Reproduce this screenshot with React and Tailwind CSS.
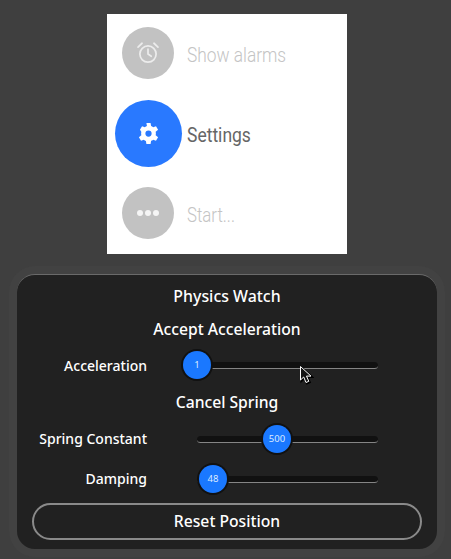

const Row = ({ color, big, text, textColor, weight, squeeze, children }) => (
  <div className="flex h-[80px] w-full items-center">
    <div className="flex w-[78px] ml-[2px] shrink-0 items-center justify-center -translate-y-[1px]">
      <div className={`flex items-center justify-center rounded-full ${big ? 'h-[67px] w-[67px]' : 'h-[52px] w-[52px]'} ${color}`}>{children}</div>
    </div>
    <span className={`inline-block origin-left whitespace-nowrap translate-y-[1px] text-[20px] leading-none font-['Roboto',sans-serif] ${squeeze} ${weight} ${textColor}`}>{text}</span>
  </div>
);

const Slider = ({ label, value, offset, h, shift }) => (
  <div className={`flex items-center ${h}`}>
    <div className={`w-[115px] whitespace-nowrap text-right text-[14px] leading-none font-medium text-white ${shift}`}>{label}</div>
    <div className="relative ml-[50px] h-[7px] w-[181px] rounded-full border-b border-b-[#858585] bg-[#111]">
      <div style={{ left: offset }} className="absolute top-1/2 flex h-[28px] w-[28px] -translate-x-1/2 -translate-y-1/2 items-center justify-center rounded-full bg-[#1a78ff] text-[9.5px] leading-none text-[#dcebff] shadow-[0_0_0_2px_#111]">
        {value}
      </div>
    </div>
  </div>
);

export default function App() {
  return (
    <div className="relative h-[559px] w-[451px] overflow-hidden bg-[#3f3f3f] pt-[14px] font-['Noto_Sans',sans-serif]">
      <div className="ml-[107px] flex h-[240px] w-[240px] flex-col bg-white">
        <Row color="bg-[#c2c2c2]" text="Show alarms" textColor="text-[#c4c4c4]" weight="font-light" squeeze="scale-x-[0.865]">
          <svg width="26" height="26" viewBox="0 0 24 24" fill="none" stroke="#ececec" strokeWidth="1.6" strokeLinecap="round" strokeLinejoin="round">
            <circle cx="12" cy="13" r="7.5" />
            <path d="M12 8.5V13l3 2" />
            <path d="M2.8 6.5 6.500 3M21.200 6.500 17.500 3" />
          </svg>
        </Row>
        <Row big color="bg-[#2979ff]" text="Settings" textColor="text-[#666]" weight="font-normal" squeeze="scale-x-[0.875]">
          <svg width="25" height="25" viewBox="0 0 24 24" fill="#fff">
            <path fillRule="evenodd" d="M10 2h4l.5 2.900a7.500 7.500 0 0 1 2 1.100l2.700-1 2 3.400-2.300 1.900a7.500 7.500 0 0 1 0 3.300l2.300 1.900-2 3.400-2.700-1a7.500 7.500 0 0 1-2 1.100L14 22h-4l-.5-2.900a7.500 7.500 0 0 1-2-1.100l-2.700 1-2-3.400 2.300-1.900a7.500 7.500 0 0 1 0-3.300L3.800 8.400l2-3.400 2.700 1a7.500 7.500 0 0 1 2-1.100zM12 9a3 3 0 1 0 0 6 3 3 0 0 0 0-6z" />
          </svg>
        </Row>
        <Row color="bg-[#c2c2c2]" text="Start..." textColor="text-[#c4c4c4]" weight="font-light" squeeze="scale-x-[0.84]">
          <div className="flex gap-[2px]">
            <span className="h-[6px] w-[6px] rounded-full bg-[#f5f5f5]" />
            <span className="h-[6px] w-[6px] rounded-full bg-[#f5f5f5]" />
            <span className="h-[6px] w-[6px] rounded-full bg-[#f5f5f5]" />
          </div>
        </Row>
      </div>

      <div className="ml-[17px] mt-[20px] h-[275px] w-[420px] rounded-[18px] border-t border-[#6a6a6a] bg-[#212121] px-[15px] pt-[8px] shadow-[0_0_0_8px_#424242]">
        <div className="text-center text-[15.9px] leading-[26px] font-medium text-white">Physics Watch</div>
        <div className="mt-[7px] text-center text-[15.7px] leading-[26px] font-medium text-white">Accept Acceleration</div>
        <Slider h="h-[46px]" label="Acceleration" value="1" offset="0px" shift="translate-y-[1px]" />
        <div className="text-center text-[15.7px] leading-[28px] font-medium text-white">Cancel Spring</div>
        <Slider h="h-[46px]" label="Spring Constant" value="500" offset="80px" shift="-translate-y-[0.5px]" />
        <Slider h="h-[34px]" label="Damping" value="48" offset="16px" shift="translate-y-0" />
        <button className="mt-[7px] h-[37px] w-[390px] rounded-full border-2 border-[#8a8a8a] text-[15.7px] leading-none font-medium text-white">Reset Position</button>
      </div>

      <svg className="absolute left-[299px] top-[365px]" width="15" height="21" viewBox="0 0 15 21">
        <path d="M2.500 2.500V16l3.200-3 2.300 5.500 2.800-1.200-2.300-5.200h4.500z" fill="#000" stroke="#000" strokeWidth="2" />
        <path d="M1.500 1.500V15l3.200-3 2.300 5.500 2.800-1.200-2.300-5.200h4.500z" fill="#111" stroke="#fff" strokeWidth="1" />
      </svg>
    </div>
  );
}
